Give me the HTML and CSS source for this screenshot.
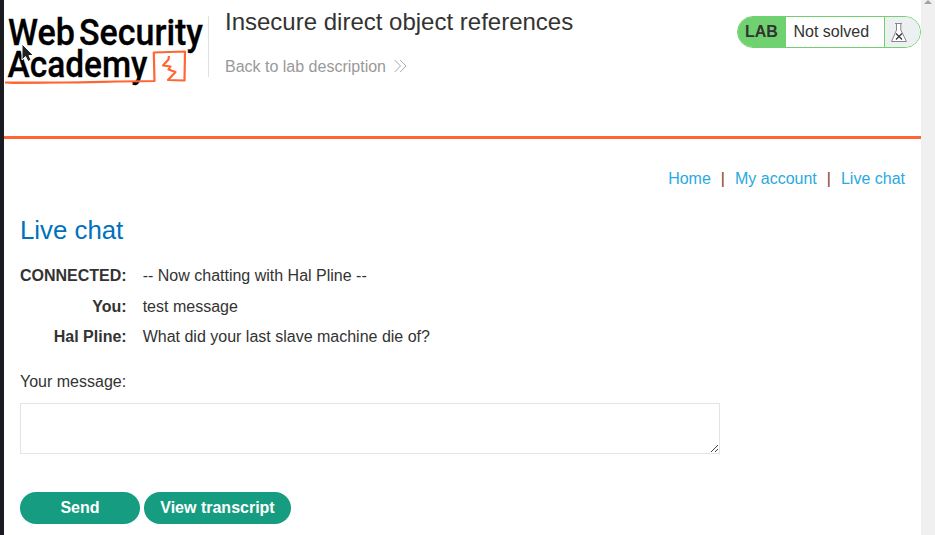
FILE: index.html
```
<!DOCTYPE html>
<html lang="en">
<head>
<meta charset="utf-8">
<title>Insecure direct object references</title>
<link rel="stylesheet" href="styles.css">
</head>
<body>
<div class="window">
  <div class="page">
    <header class="lab-header">
      <svg class="logo" width="204" height="90" viewBox="0 0 204 90">
        <g class="logo-text">
          <text x="4" y="45" textLength="67" lengthAdjust="spacingAndGlyphs">Web</text>
          <text x="75" y="45" textLength="124" lengthAdjust="spacingAndGlyphs">Security</text>
          <text x="3.500" y="77" textLength="140" lengthAdjust="spacingAndGlyphs">Academy</text>
        </g>
        <path class="logo-line" d="M1 82.500C18 83 36 82.500 60 82.500C85 82.500 105 81.500 150.500 81L149.800 52.500L181 51.500L180.500 80.500L164 80L171.500 72L164.500 69.500L166.500 66.500L159 65.500L164.500 59.500L165 56"/>
        <path class="logo-under" d="M1 82.500L46 83L10 84Z"/>
      </svg>
      <svg class="pointer" width="14" height="20" viewBox="0 0 14 20"><path d="M1 1V17L4.500 13.500L7 18.500L10 17L8 12.500H12.500Z"/></svg>
      <div class="title-box">
        <h2>Insecure direct object references</h2>
        <a class="back">Back to lab description<svg width="13" height="14" viewBox="0 0 13 14"><path d="M.7 1L6.500 7L.7 13M6.200 1L12 7L6.200 13"/></svg></a>
      </div>
      <div class="status">
        <span class="lab">LAB</span>
        <span class="state">Not solved</span>
        <span class="flask"><svg width="18" height="22" viewBox="0 0 18 22"><path class="glass" d="M5 1.500H12M6.500 1.500V8L1.500 19.500H16.500L10.800 8V1.500"/><path class="cross" d="M6 11.500L12 17.500M12 11.500L6 17.500"/></svg></span>
      </div>
    </header>
    <main>
      <nav><a>Home</a><i>|</i><a>My account</a><i>|</i><a>Live chat</a></nav>
      <h1>Live chat</h1>
      <div class="chat">
        <b>CONNECTED:</b><span>-- Now chatting with Hal Pline --</span>
        <b>You:</b><span>test message</span>
        <b>Hal Pline:</b><span>What did your last slave machine die of?</span>
      </div>
      <label for="message">Your message:</label>
      <div class="field">
        <textarea id="message"></textarea>
        <svg class="grip" width="7" height="7" viewBox="0 0 7 7" shape-rendering="crispEdges"><path d="M0 6h1v1H0zM1 5h1v1H1zM2 4h1v1H2zM3 3h1v1H3zM4 2h1v1H4zM5 1h1v1H5zM6 0h1v1H6zM4 6h1v1H4zM5 5h1v1H5zM6 4h1v1H6z"/></svg>
      </div>
      <div class="actions"><button class="send">Send</button><button class="transcript">View transcript</button></div>
    </main>
  </div>
  <div class="scrollbar"><svg width="8" height="4" viewBox="0 0 8 4"><path d="M0 4L4 0L8 4Z"/></svg></div>
</div>
</body>
</html>
```
FILE: styles.css
```
* { box-sizing: border-box; }
body {
  margin: 0;
  overflow: hidden;
  background: #fff;
  color: #333332;
  font: 16px/20px "Liberation Sans", Arial, sans-serif;
}
.window {
  display: flex;
  height: 535px;
  border-left: 4px solid #1c1b22;
}
.page { flex: 1; }
.scrollbar {
  width: 14px;
  background: #f0f0f0;
  display: flex;
  justify-content: center;
  align-items: flex-start;
}
.scrollbar svg { fill: #a0a0a0; }
.lab-header {
  position: relative;
  display: flex;
  align-items: flex-start;
  height: 139px;
  border-bottom: 3px solid #ff6633;
}
.logo {
  flex: none;
  overflow: visible;
}
.logo-text {
  font: 500 37px/1 Roboto, sans-serif;
  fill: #000;
  stroke: #000;
  stroke-width: .3;
}
.logo-line {
  fill: none;
  stroke: #ff6633;
  stroke-width: 2.2;
  stroke-linejoin: round;
}
.logo-under { fill: #ff6633; }
.pointer {
  position: absolute;
  left: 17px;
  top: 43px;
  fill: #222;
  stroke: #fff;
}
.title-box {
  flex: 1;
  height: 61px;
  margin-top: 16px;
  padding-left: 16px;
  border-left: 1px solid #e0e0e0;
}
h2 {
  margin: -8px 0 0;
  font-size: 24px;
  font-weight: 400;
  line-height: 28px;
}
.back {
  display: flex;
  align-items: center;
  gap: 8px;
  margin-top: 21px;
  color: #999;
}
.back svg {
  margin-top: -2px;
  fill: none;
  stroke: #aaa;
}
.status {
  display: flex;
  width: 184px;
  height: 32px;
  margin-top: 16px;
  border: 1px solid #6fd16f;
  border-radius: 16px;
  overflow: hidden;
  line-height: 30px;
}
.lab {
  width: 48px;
  padding-left: 7px;
  background: #6fd16f;
  font-weight: 700;
}
.state {
  flex: 1;
  padding-left: 7.5px;
}
.flask {
  width: 36px;
  padding: 5px 0 0 5px;
  border-left: 1px solid #6fd16f;
  background: #ecf0f1;
  line-height: 0;
}
.glass {
  fill: #fff;
  stroke: #888;
}
.cross {
  stroke: #333;
  stroke-width: 1.2;
}
main { padding: 30px 16px 0; }
nav {
  display: flex;
  justify-content: flex-end;
}
nav a { color: #29a9e1; }
nav i {
  margin: 0 10px;
  color: #8b3a1c;
  font-style: normal;
}
h1 {
  margin: 26px 0 0;
  color: #0071bc;
  font-size: 25.8px;
  font-weight: 400;
  line-height: 30px;
}
.chat {
  display: grid;
  grid-template-columns: max-content auto;
  grid-auto-rows: 30.5px;
  column-gap: 16px;
  align-items: center;
  margin-top: 16px;
}
.chat b { text-align: right; }
label {
  display: block;
  margin-top: 19px;
}
.field {
  position: relative;
  width: 700px;
  height: 51px;
  margin-top: 11px;
}
textarea {
  display: block;
  width: 100%;
  height: 100%;
  border: 1px solid #e4e4e4;
  resize: none;
  outline: none;
}
.grip {
  position: absolute;
  right: 2px;
  bottom: 2px;
  fill: #444;
}
.actions {
  display: flex;
  gap: 4px;
  margin-top: 38px;
}
button {
  height: 32px;
  padding: 0;
  border: 0;
  border-radius: 16px;
  background: #169c80;
  color: #fff;
  font: bold 16px/32px "Liberation Sans", Arial, sans-serif;
}
.send { width: 120px; }
.transcript { width: 147px; }
```
